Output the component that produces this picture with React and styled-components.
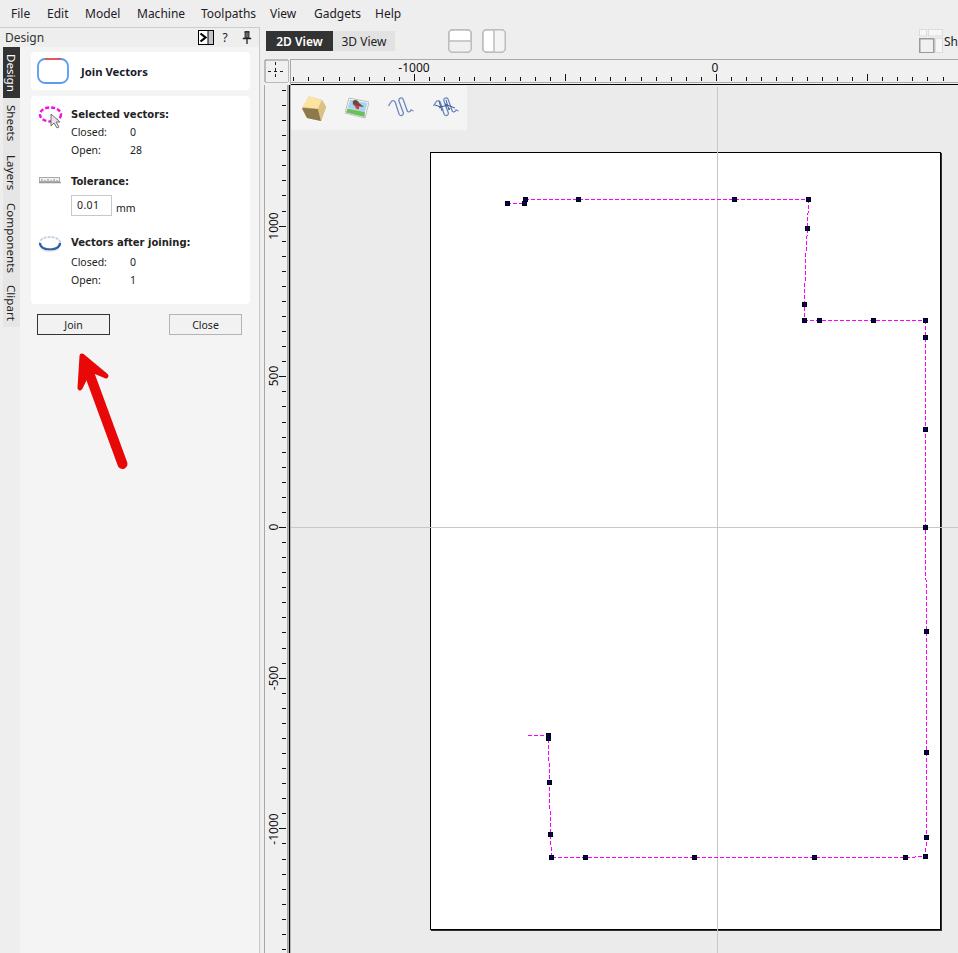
import React from "react";
import styled, { createGlobalStyle } from "styled-components";

const Global = createGlobalStyle`
  html, body { margin: 0; padding: 0; height: 100%; overflow: hidden; background: #eeeeee; }
  * { box-sizing: border-box; }
`;
const FONT = `"Noto Sans", "Open Sans", "Liberation Sans", sans-serif`;

const Root = styled.div`
  position: relative;
  width: 958px;
  height: 953px;
  overflow: hidden;
  background: #eeeeee;
  font-family: ${FONT};
  font-size: 10.5px;
  color: #1a1a1a;
  display: flex;
  flex-direction: column;
`;
const MenuBar = styled.nav`
  height: 27px;
  flex: none;
  display: flex;
  align-items: center;
  padding: 0 0 1px 11px;
  font-size: 12px;
  color: #1f1a28;
`;
const MenuItem = styled.span`
  width: ${(p) => p.$w}px;
  flex: none;
`;
const Body = styled.div`
  flex: 1;
  min-height: 0;
  display: flex;
`;
const LeftPanel = styled.aside`
  width: 260px;
  flex: none;
  display: flex;
  flex-direction: column;
  border-right: 1px solid #c8c8c8;
`;
const PanelHeader = styled.header`
  height: 20px;
  flex: none;
  border-top: 1px solid #cccccc;
  display: flex;
  align-items: center;
  padding-left: 5px;
  font-size: 12px;
  color: #333;
`;
const HeaderTitle = styled.span`
  flex: 1;
`;
const HeaderIcons = styled.div`
  display: flex;
  align-items: center;
  width: 61px;
  flex: none;
  color: #222;
`;
const HelpMark = styled.span`
  width: 22px;
  text-align: center;
  font-size: 12px;
  margin-right: 6px;
`;
const PanelBody = styled.div`
  flex: 1;
  min-height: 0;
  display: flex;
  padding-left: 3px;
`;
const TabStrip = styled.div`
  width: 17px;
  flex: none;
  align-self: flex-start;
  height: 280px;
  background: #e6e6e6;
  display: flex;
  flex-direction: column;
`;
const VTab = styled.div`
  writing-mode: vertical-rl;
  height: ${(p) => p.$h}px;
  flex: none;
  width: 17px;
  display: flex;
  align-items: center;
  justify-content: center;
  padding-right: 1px;
  font-size: 11.6px;
  line-height: 16px;
  background: ${(p) => (p.$active ? "#333333" : "transparent")};
  color: ${(p) => (p.$active ? "#ffffff" : "#222222")};
`;
const PanelContent = styled.div`
  flex: 1;
  background: #f4f4f4;
  padding: 5px 9px 0 11px;
  display: flex;
  flex-direction: column;
`;
const TitleCard = styled.div`
  height: 38px;
  background: #fff;
  border-radius: 4px;
  display: flex;
  align-items: center;
  padding-left: 6px;
  gap: 12px;
`;
const TitleText = styled.div`
  font-weight: 700;
  font-size: 11.3px;
  color: #1a1a2a;
`;
const InfoCard = styled.div`
  margin-top: 6px;
  height: 208px;
  background: #fff;
  border-radius: 4px;
  padding: 9px 0 0 7px;
  display: flex;
  flex-direction: column;
`;
const Section = styled.section`
  display: grid;
  grid-template-columns: 33px 1fr;
  margin-top: ${(p) => p.$mt || 0}px;
`;
const SectionIcon = styled.div`
  display: flex;
  align-items: flex-start;
`;
const SectionBody = styled.div`
  display: flex;
  flex-direction: column;
`;
const Heading = styled.div`
  height: 18px;
  line-height: 20px;
  font-family: "DejaVu Sans", sans-serif;
  font-weight: 700;
  font-size: 10px;
  color: #222;
  margin-bottom: ${(p) => p.$mb || 0}px;
`;
const DataRow = styled.div`
  display: grid;
  grid-template-columns: 59px 1fr;
  height: 18px;
  line-height: 18px;
  color: #222;
`;
const InputRow = styled.div`
  display: flex;
  align-items: flex-end;
  gap: 4px;
  margin-top: 5px;
`;
const NumberBox = styled.div`
  width: 41px;
  height: 21px;
  border: 1px solid #c8c8c8;
  background: #fff;
  padding-left: 5px;
  line-height: 18px;
  letter-spacing: 0.4px;
`;
const Unit = styled.span`
  line-height: 16px;
`;
const ButtonRow = styled.div`
  margin-top: 10px;
  padding: 0 8px 0 6px;
  display: flex;
  justify-content: space-between;
`;
const Button = styled.button`
  width: 73px;
  height: 21px;
  padding: 0;
  background: #f2f2f2;
  border: 1px solid ${(p) => (p.$primary ? "#333333" : "#b4b4b4")};
  font: inherit;
  color: #222;
`;
const RightPane = styled.main`
  flex: 1;
  min-width: 0;
  display: flex;
  flex-direction: column;
  padding-left: 4px;
`;
const ViewBar = styled.div`
  height: 32px;
  flex: none;
  display: flex;
  align-items: center;
  position: relative;
  padding: 0 0 4px 2px;
`;
const ViewTab = styled.div`
  height: 20px;
  width: ${(p) => p.$w}px;
  display: flex;
  align-items: center;
  justify-content: center;
  font-size: 12px;
  background: ${(p) => (p.$active ? "#333333" : "#e2e2e2")};
  color: ${(p) => (p.$active ? "#fff" : "#222")};
  font-weight: ${(p) => (p.$active ? 600 : 400)};
`;
const SplitGroup = styled.div`
  display: flex;
  gap: 10px;
  margin-left: 53px;
`;
const LayoutTools = styled.div`
  margin-left: auto;
  display: flex;
  align-items: center;
  gap: 1px;
  white-space: nowrap;
  width: 39px;
  font-size: 12px;
  color: #222;
  flex: none;
`;
const RulerRow = styled.div`
  height: 26px;
  flex: none;
  display: flex;
`;
const WorkRow = styled.div`
  flex: 1;
  min-height: 0;
  display: flex;
`;
const Corner = styled.svg`
  width: 26px;
  height: 26px;
  flex: none;
  display: block;
`;
const RulerSvg = styled.svg`
  display: block;
  flex: none;
`;
const Canvas = styled.div`
  position: relative;
  flex: 1;
  min-width: 0;
  background: #ebebeb;
`;
const Drawing = styled.svg`
  display: block;
`;
const ToolStrip = styled.div`
  position: absolute;
  left: 0;
  top: 1px;
  width: 176px;
  height: 44px;
  background: #f4f4f4;
  display: flex;
  align-items: center;
  padding-left: 11px;
  gap: 19px;
`;
const Arrow = styled.svg`
  position: absolute;
  left: 60px;
  top: 340px;
  width: 80px;
  height: 140px;
`;

const JoinIcon = () => (
  <svg width="32" height="26" viewBox="0 0 32 26">
    <rect x="1" y="1" width="30" height="24" rx="7" fill="#fff" stroke="#5a9bf0" strokeWidth="1.8" />
    <path d="M8 1H24" stroke="#f05050" strokeWidth="1.8" />
  </svg>
);
const DockIcon = () => (
  <svg width="16" height="15" viewBox="0 0 16 15">
    <rect x="0.5" y="0.5" width="15" height="14" fill="#fff" stroke="#000" />
    <rect x="10" y="1" width="5" height="13" fill="#c4c4c4" />
    <path d="M10 1V14" stroke="#000" />
    <path d="M2.5 3.500 7.500 7.500 2.500 11.500" fill="none" stroke="#000" strokeWidth="2.200" />
  </svg>
);
const SelectIcon = () => (
  <svg width="26" height="24" viewBox="0 0 26 24">
    <ellipse cx="12.500" cy="9.500" rx="10.500" ry="7" fill="#fff" stroke="#f010e0" strokeWidth="2.400" strokeDasharray="4 2" />
    <path d="M13 9v12l3-3 3 5 2-1-3-5h4z" fill="#e4e4e4" stroke="#666" strokeWidth="0.9" />
  </svg>
);
const RulerIcon = () => (
  <svg width="24" height="14" viewBox="0 0 24 14">
    <rect x="1.500" y="5.500" width="20" height="4" fill="#f0f0f0" stroke="#aaa" />
    <path d="M4 7v2M7 8v1M10 7v2M13 8v1M16 7v2M19 8v1" stroke="#777" strokeWidth="0.8" />
    <path d="M1 10.500H23" stroke="#999" />
    <path d="M1 11.500H23" stroke="#e4e4e4" />
  </svg>
);
const RingIcon = () => (
  <svg width="26" height="22" viewBox="0 0 26 22">
    <ellipse cx="12" cy="10" rx="10.2" ry="6" fill="#fff" stroke="#c8d4e4" strokeWidth="2" strokeDasharray="3 1" />
    <path d="M2 10c0 4 4 6.500 10 6.500s10-2.500 10-6.500" fill="none" stroke="#2f5fa5" strokeWidth="2.200" />
    <path d="M3 16c4 3 13 3 18 0" fill="none" stroke="#ddd" />
  </svg>
);
const SplitIcon = ({ vertical }) => (
  <svg width="24" height="24" viewBox="0 0 24 24">
    <rect x="0.750" y="0.750" width="22.500" height="22.500" rx="4" fill="#fff" stroke="#bdbdbd" strokeWidth="1.500" />
    {vertical ? (
      <>
        <path d="M12 1h11v22H12z" fill="#f4f4f4" stroke="none" />
        <path d="M12 1V23" stroke="#bdbdbd" strokeWidth="1.500" />
      </>
    ) : (
      <>
        <path d="M1 12h22v7a4 4 0 0 1-4 4H5a4 4 0 0 1-4-4z" fill="#f0f0f0" />
        <path d="M1 12H23" stroke="#bdbdbd" strokeWidth="1.500" />
      </>
    )}
    <rect x="0.750" y="0.750" width="22.500" height="22.500" rx="4" fill="none" stroke="#bdbdbd" strokeWidth="1.500" />
  </svg>
);
const PanesIcon = () => (
  <svg width="24" height="24" viewBox="0 0 24 24" style={{ flex: "none" }}>
    <rect x="0.500" y="0.500" width="7" height="6.500" fill="#f6f6f6" stroke="#dcdcdc" />
    <rect x="9.500" y="0.500" width="14" height="6.500" fill="#f6f6f6" stroke="#dcdcdc" />
    <rect x="0.750" y="9.750" width="14" height="14" fill="#f0f0f0" stroke="#9a9a9a" strokeWidth="1.500" />
    <rect x="16.500" y="9.500" width="7" height="14" fill="#f6f6f6" stroke="#dcdcdc" />
  </svg>
);
const PinIcon = () => (
  <svg width="10" height="13" viewBox="0 0 10 13">
    <path d="M2.500 0.800h5" stroke="#222" strokeWidth="1.300" />
    <path d="M3 1h4v6H3z" fill="#666" stroke="#222" strokeWidth="0.800" />
    <path d="M0.800 7.500h8.400M5 8v5" stroke="#222" strokeWidth="1.300" fill="none" />
  </svg>
);
const CubeIcon = () => (
  <svg width="24" height="25" viewBox="0 0 24 25">
    <path d="M7 0.500 20 4 24 11 19 25 5 22 0 13z" fill="#c9b27a" />
    <path d="M7 0.500 20 4 16 13 0 11z" fill="#fbe3a0" />
    <path d="M0 12 16 13 19 25 5 22z" fill="#8c7a4c" />
    <path d="M20 4 24 11 19 25 16 13z" fill="#d9c285" />
  </svg>
);
const PictureIcon = () => (
  <svg width="24" height="22" viewBox="0 0 24 22">
    <path d="M4 1 24 5 20 21 0 16z" fill="#fff" stroke="#bbb" />
    <path d="M5 2.500 22.500 6 20 15 2.500 11z" fill="#a8d4f0" />
    <path d="M2.500 11.500 20 15 19.500 20 1 15.500z" fill="#6cc05c" />
    <path d="M8 4c2-2 5-1 6 2l5 4-7-1c-3 0-5-2-4-5z" fill="#6b4a3a" />
    <path d="M9.500 7c2 1 3 2 5 2.500l-1 3c-2 0-4-3-4-5.500z" fill="#d83a3a" />
  </svg>
);
const WaveIcon = ({ arrows }) => (
  <svg width="26" height="24" viewBox="0 0 26 24">
    <path
      d="M0.500 10 L3 6 A2.300 2.300 0 0 1 7.200 6 L11.200 18.500 A2.300 2.300 0 0 0 15.400 17 L10.800 4.500 A2.300 2.300 0 0 1 15 3 L19.500 15.500 A2.300 2.300 0 0 0 23 14 L25.500 15"
      fill="none"
      stroke="#6c87bf"
      strokeWidth="1.300"
    />
    {arrows && (
      <path
        d="M2 9 L8 11 L14 9 L22 12 M6 5 L9 15 M13 4 L16 14 M12 8 l2 1 -1 2 M8 11 l-2 1 M17 12 l-1 2"
        fill="none"
        stroke="#3c5da0"
        strokeWidth="1"
      />
    )}
  </svg>
);

const nodes = [
  [507, 203], [524, 203], [525, 199], [578, 199], [734, 199], [808, 199], [807, 228],
  [804, 304], [804, 320], [819, 320], [873, 320], [925, 320], [925, 337], [925, 429],
  [925, 527], [926, 631], [926, 752], [926, 837], [925, 856], [905, 857], [814, 857],
  [694, 857], [585, 857], [551, 857], [550, 834], [549, 782], [548, 738], [548, 735],
];
const pathD =
  "M507 203.500H524 M525 199.500H808 M808.500 199L807.500 228L805.500 262L804.500 304V320 M804 320.500H926 " +
  "M925.500 320V429L925.500 527L926.500 631L926.500 752L926.500 837L925.500 856.500L905 857.500H551 " +
  "M551.500 857L550.500 834L549.500 782L548.500 738V735.500H528";

const hTicks = [];
for (let n = -28; n <= 16; n++) {
  const x = Math.round(716 + n * 15.1);
  if (x >= 292) hTicks.push({ x, major: n % 10 === 0 });
}
const vTicks = [];
for (let n = -29; n <= 28; n++) {
  const y = Math.round(527 + n * 15.07);
  if (y >= 90) vTicks.push({ y, major: n % 10 === 0 });
}
const vLabels = [
  ["1000", 226],
  ["500", 376],
  ["0", 527],
  ["-500", 678],
  ["-1000", 829],
];

const HRuler = () => (
  <RulerSvg width="668" height="26" viewBox="290 59 668 26">
    <rect x="290" y="59" width="668" height="26" fill="#f0f0f0" />
    <path d="M290 59.500H958M290 82.500H958" stroke="#a8a8a8" />
    <path d="M290 84.500H958" stroke="#000" />
    <path d="M290.500 59V85" stroke="#a8a8a8" />
    <g fill="#111" shapeRendering="crispEdges">
      {hTicks.map((t) => (
        <rect key={t.x} x={t.x} y={t.major ? 74 : 77} width="1" height={t.major ? 7 : 4} />
      ))}
    </g>
    <text x="414" y="72" textAnchor="middle" fontSize="12" fill="#111" fontFamily={FONT}>-1000</text>
    <text x="715" y="72" textAnchor="middle" fontSize="12" fill="#111" fontFamily={FONT}>0</text>
  </RulerSvg>
);
const VRuler = () => (
  <RulerSvg width="27" height="868" viewBox="264 85 27 868">
    <rect x="264" y="85" width="27" height="868" fill="#f0f0f0" />
    <path d="M264.500 85V953M287.500 85V953" stroke="#a8a8a8" />
    <path d="M289.500 85V953" stroke="#000" strokeWidth="1.500" />
    <g fill="#111" shapeRendering="crispEdges">
      {vTicks.map((t) => (
        <rect key={t.y} x={t.major ? 279 : 282} y={t.y} width={t.major ? 7 : 4} height="1" />
      ))}
    </g>
    {vLabels.map(([s, y]) => (
      <text key={s} transform={`translate(277.500 ${y}) rotate(-90)`} textAnchor="middle" fontSize="12" fill="#111" fontFamily={FONT}>{s}</text>
    ))}
  </RulerSvg>
);

export default function App() {
  return (
    <Root>
      <Global />
      <MenuBar>
        {[["File", 36], ["Edit", 38], ["Model", 52], ["Machine", 64], ["Toolpaths", 69], ["View", 44], ["Gadgets", 61], ["Help", 40]].map(([t, w]) => (
          <MenuItem key={t} $w={w}>{t}</MenuItem>
        ))}
      </MenuBar>
      <Body>
        <LeftPanel>
          <PanelHeader>
            <HeaderTitle>Design</HeaderTitle>
            <HeaderIcons>
              <DockIcon />
              <HelpMark>?</HelpMark>
              <PinIcon />
            </HeaderIcons>
          </PanelHeader>
          <PanelBody>
            <TabStrip>
              <VTab $active $h={51}>Design</VTab>
              <VTab $h={50}>Sheets</VTab>
              <VTab $h={49}>Layers</VTab>
              <VTab $h={82}>Components</VTab>
              <VTab $h={48}>Clipart</VTab>
            </TabStrip>
            <PanelContent>
              <TitleCard>
                <JoinIcon />
                <TitleText>Join Vectors</TitleText>
              </TitleCard>
              <InfoCard>
                <Section>
                  <SectionIcon><SelectIcon /></SectionIcon>
                  <SectionBody>
                    <Heading>Selected vectors:</Heading>
                    <DataRow><span>Closed:</span><span>0</span></DataRow>
                    <DataRow><span>Open:</span><span>28</span></DataRow>
                  </SectionBody>
                </Section>
                <Section $mt={13}>
                  <SectionIcon><RulerIcon /></SectionIcon>
                  <SectionBody>
                    <Heading>Tolerance:</Heading>
                    <InputRow>
                      <NumberBox>0.01</NumberBox>
                      <Unit>mm</Unit>
                    </InputRow>
                  </SectionBody>
                </Section>
                <Section $mt={17}>
                  <SectionIcon><RingIcon /></SectionIcon>
                  <SectionBody>
                    <Heading $mb={2}>Vectors after joining:</Heading>
                    <DataRow><span>Closed:</span><span>0</span></DataRow>
                    <DataRow><span>Open:</span><span>1</span></DataRow>
                  </SectionBody>
                </Section>
              </InfoCard>
              <ButtonRow>
                <Button $primary>Join</Button>
                <Button>Close</Button>
              </ButtonRow>
            </PanelContent>
          </PanelBody>
        </LeftPanel>
        <RightPane>
          <ViewBar>
            <ViewTab $active $w={67}>2D View</ViewTab>
            <ViewTab $w={62}>3D View</ViewTab>
            <SplitGroup>
              <SplitIcon />
              <SplitIcon vertical />
            </SplitGroup>
            <LayoutTools>
              <PanesIcon />
              <span>Sh</span>
            </LayoutTools>
          </ViewBar>
          <RulerRow>
            <Corner viewBox="264 59 26 26">
              <rect x="264" y="59" width="26" height="26" fill="#f0f0f0" />
              <path d="M265 82V60H288" fill="none" stroke="#888" />
              <path d="M265 82.500H288M288.500 60V82" stroke="#bbb" />
              <path d="M275.500 62V80M268 71.500H286" stroke="#222" strokeDasharray="3 3" />
            </Corner>
            <HRuler />
          </RulerRow>
          <WorkRow>
            <VRuler />
            <Canvas>
              <Drawing width="667" height="868" viewBox="291 85 667 868">
                <rect x="431" y="153" width="511" height="778" fill="#333" />
                <rect x="430.500" y="152.500" width="510" height="777" fill="#fff" stroke="#000" />
                <path d="M291 527.500H958M717.500 87V953" stroke="#c8c8c8" />
                <path d={pathD} fill="none" stroke="#ff00ff" strokeDasharray="4 2" shapeRendering="crispEdges" />
                <g shapeRendering="crispEdges">
                  {nodes.map(([x, y], i) => (
                    <React.Fragment key={i}>
                      <rect x={x - 2} y={y - 2} width="5" height="5" fill="#000" />
                      <rect x={x - 1} y={y - 1} width="3" height="3" fill="#000070" />
                    </React.Fragment>
                  ))}
                </g>
              </Drawing>
              <ToolStrip>
                <CubeIcon />
                <PictureIcon />
                <WaveIcon />
                <WaveIcon arrows />
              </ToolStrip>
            </Canvas>
          </WorkRow>
        </RightPane>
      </Body>
      <Arrow viewBox="60 340 80 140">
        <path d="M82 356 106 376 94 371 88 372 80 388Z" fill="#e80808" stroke="#e80808" strokeLinejoin="round" strokeWidth="5" />
        <path d="M122.500 464 88 370" fill="none" stroke="#e80808" strokeLinecap="round" strokeWidth="10" />
      </Arrow>
    </Root>
  );
}
